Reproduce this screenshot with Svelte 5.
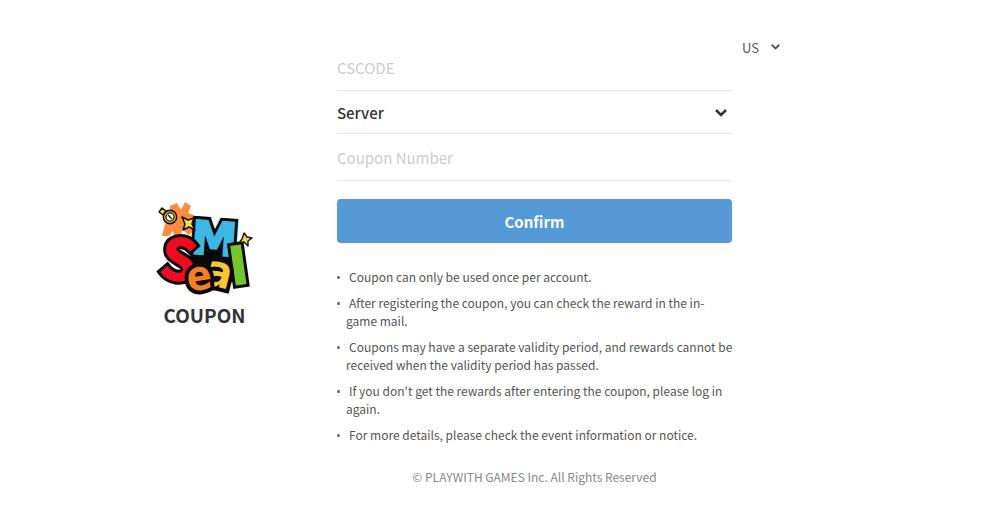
<script lang="ts">
  let country = $state('US');
  let server = $state('');
  let cscode = $state('');
  let coupon = $state('');

  const logoLetters = [
    { char: 'M', color: 'blue', x: 57, y: 55, size: 46, turn: 4 },
    { char: 'l', color: 'green', x: 82, y: 84, size: 50, turn: -8 },
    { char: 'a', color: 'yellow', x: 62, y: 87, size: 44, turn: 14 },
    { char: 'S', color: 'red', x: 21, y: 80, size: 56, turn: 9 },
    { char: 'e', color: 'orange', x: 42, y: 90, size: 41, turn: -8 }
  ];

  const notices = [
    'Coupon can only be used once per account.',
    'After registering the coupon, you can check the reward in the in-game mail.',
    'Coupons may have a separate validity period, and rewards cannot be received when the validity period has passed.',
    "If you don't get the rewards after entering the coupon, please log in again.",
    'For more details, please check the event information or notice.'
  ];

  function handleSubmit(e: Event) {
    e.preventDefault();
  }
</script>

<div class="page">
  <header class="brand">
    <svg class="logo" viewBox="0 0 96 96" role="img" aria-label="Seal M">
      <path class="sun" d="M13 6 L20 3 L24 10 L28 2 L34 6 L31 13 L37 15 L35 21 L30 22 L36 31 L32 35 L25 29 L24 37 L17 36 L16 31 L12 36 L5 36 L8 24 L13 17 Z" />
      <path class="backing" d="M38 50 L80 52 L86 80 L66 84 L34 80 L30 60 Z" />
      {#each logoLetters as l}
        <g class={l.color} transform="rotate({l.turn} {l.x} {l.y - 14})" font-size={l.size}>
          <text class="edge" x={l.x} y={l.y}>{l.char}</text>
          <text x={l.x} y={l.y}>{l.char}</text>
        </g>
      {/each}
      <g stroke="#17140b" stroke-linejoin="round">
        <path d="M2 12 L5 8 L9 11 L6 15 Z" fill="#f7d64a" stroke-width="1.5" />
        <circle cx="13" cy="17" r="6.6" fill="#f7d64a" stroke-width="1.6" />
        <circle cx="13" cy="17" r="4.1" fill="#fff8d6" stroke-width="1.3" />
        <path d="M11 15 L15 19" stroke-width="1.3" />
        <path d="M25 17 L31 20 L37 18 L35 24 L38 30 L32 27 L26 30 L28 24 Z" fill="#fbd84b" stroke-width="1.6" />
        <path d="M87 33 L90 37 L95 38 L91 41 L91 46 L87 42 L82 43 L85 39 Z" fill="#f1cf52" stroke-width="1.4" />
      </g>
    </svg>
    <h1>COUPON</h1>
  </header>

  <main>
    <form onsubmit={handleSubmit}>
      <input type="text" placeholder="CSCODE" aria-label="CSCODE" bind:value={cscode} />
      <div class="select-wrap">
        <select class="server" aria-label="Server" bind:value={server}>
          <option value="">Server</option>
        </select>
        <svg class="arrow" viewBox="0 0 12 8" aria-hidden="true"><path d="M1 1 L6 6 L11 1" /></svg>
      </div>
      <input type="text" placeholder="Coupon Number" aria-label="Coupon Number" bind:value={coupon} />
      <button type="submit">Confirm</button>
    </form>

    <ul>
      {#each notices as notice}
        <li>{notice}</li>
      {/each}
    </ul>

    <footer>© PLAYWITH GAMES Inc. All Rights Reserved</footer>
  </main>

  <div class="country">
    <div class="select-wrap">
      <select aria-label="Country" bind:value={country}>
        <option>US</option>
      </select>
      <svg class="arrow" viewBox="0 0 12 8" aria-hidden="true"><path d="M1 1 L6 6 L11 1" /></svg>
    </div>
  </div>
</div>

<style>
  :global(body) {
    background: #fff;
  }

  .page {
    display: grid;
    grid-template-columns: 265fr 395fr 196fr;
    padding: 35px 72px 32px;
    color: #555;
    font-family: 'Noto Sans CJK KR', 'Noto Sans', sans-serif;
  }

  .brand {
    display: flex;
    flex-direction: column;
    align-items: center;
    padding-top: 165px;
  }

  .logo {
    width: 96px;
    height: 96px;
    font-family: 'DejaVu Sans Condensed', 'DejaVu Sans', sans-serif;
    font-weight: 700;
    text-anchor: middle;
    overflow: visible;
  }

  .logo text {
    stroke-width: 2;
  }

  .logo .edge {
    fill: #090909;
    stroke: #090909;
    stroke-width: 8;
  }

  .sun {
    fill: #ff8b42;
  }

  .backing {
    fill: #090909;
  }

  .blue {
    fill: #3db8e4;
    stroke: #3db8e4;
    font-family: 'DejaVu Sans', sans-serif;
  }

  .red {
    fill: #f00c20;
    stroke: #f00c20;
    font-family: 'Noto Sans CJK KR', sans-serif;
  }

  .orange {
    fill: #fa7d25;
  }

  .yellow {
    fill: #fcc439;
  }

  .green {
    fill: #77c52e;
    stroke: #77c52e;
    font-family: 'DejaVu Sans', sans-serif;
  }

  h1 {
    margin: 3px 0 0;
    color: #333;
    font-size: 19px;
    font-weight: 700;
    line-height: 32px;
  }

  main {
    padding-top: 9px;
  }

  form {
    display: flex;
    flex-direction: column;
  }

  input,
  select {
    box-sizing: border-box;
    width: 100%;
    margin: 0;
    padding: 0;
    border: 0;
    border-radius: 0;
    outline: none;
    background: transparent;
    color: #333;
    font: inherit;
    appearance: none;
  }

  input {
    height: 47px;
    border-bottom: 1px solid #e8e8e8;
    font-size: 15px;
  }

  input::placeholder {
    color: #ccc;
    opacity: 1;
  }

  .select-wrap {
    display: grid;
    align-items: center;
  }

  .select-wrap > * {
    grid-area: 1 / 1;
  }

  .server {
    height: 43px;
    border-bottom: 1px solid #e8e8e8;
    font-size: 15px;
    font-weight: 500;
  }

  .arrow {
    width: 12px;
    height: 8px;
    margin-right: 5px;
    justify-self: end;
    fill: none;
    stroke: #333;
    stroke-width: 2.5;
    pointer-events: none;
  }

  button {
    height: 44px;
    margin-top: 18px;
    padding: 0;
    border: 0;
    border-radius: 4px;
    background: #5599d7;
    color: #fff;
    font: inherit;
    font-size: 15px;
    font-weight: 700;
    cursor: pointer;
  }

  ul {
    display: flex;
    flex-direction: column;
    gap: 8px;
    margin: 25px -2px 0 0;
    padding: 0;
    list-style: none;
  }

  li {
    padding-left: 9px;
    font-size: 12px;
    line-height: 18px;
  }

  li::before {
    content: '';
    display: inline-block;
    width: 3px;
    height: 3px;
    margin: 0 9px 3px -9px;
    border-radius: 1px;
    background: #777;
  }

  footer {
    margin-top: 23px;
    color: #888;
    font-size: 12px;
    line-height: 20px;
    text-align: center;
  }

  .country {
    padding-left: 10px;
  }

  .country .select-wrap {
    width: 40px;
  }

  .country select {
    height: 24px;
    color: #555;
    font-size: 13px;
  }

  .country .arrow {
    width: 9px;
    height: 6px;
    margin-right: 2px;
    stroke: #555;
  }
</style>
